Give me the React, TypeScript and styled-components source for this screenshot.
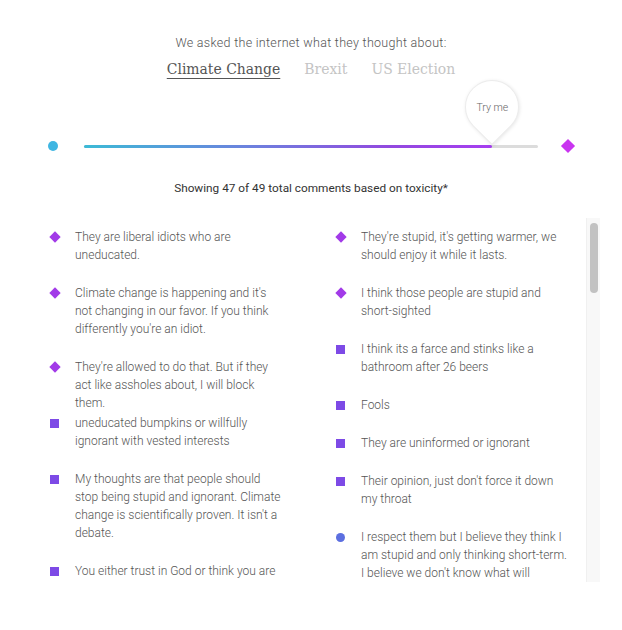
import React from 'react';
import styled, { createGlobalStyle } from 'styled-components';

type Level = 'severe' | 'toxic' | 'mild';

type CommentData = {
  text: string;
  level: Level;
  rows?: number;
};

const leftComments: CommentData[] = [
  { text: 'They are liberal idiots who are uneducated.', level: 'severe' },
  {
    text: "Climate change is happening and it's not changing in our favor. If you think differently you're an idiot.",
    level: 'severe',
  },
  //this one is given a 2 row slot even though it wraps to 3, like the original
  { text: "They're allowed to do that. But if they act like assholes about, I will block them.", level: 'severe', rows: 2 },
  { text: 'uneducated bumpkins or willfully ignorant with vested interests', level: 'toxic' },
  {
    text: "My thoughts are that people should stop being stupid and ignorant. Climate change is scientifically proven. It isn't a debate.",
    level: 'toxic',
  },
  { text: 'You either trust in God or think you are smarter than everyone else.', level: 'toxic' },
];

const rightComments: CommentData[] = [
  { text: "They're stupid, it's getting warmer, we should enjoy it while it lasts.", level: 'severe' },
  { text: 'I think those people are stupid and short-sighted', level: 'severe' },
  { text: 'I think its a farce and stinks like a bathroom after 26 beers', level: 'toxic' },
  { text: 'Fools', level: 'toxic' },
  { text: 'They are uninformed or ignorant', level: 'toxic' },
  { text: "Their opinion, just don't force it down my throat", level: 'toxic' },
  {
    text: "I respect them but I believe they think I am stupid and only thinking short-term. I believe we don't know what will happen.",
    level: 'mild',
  },
];

const topics = ['Climate Change', 'Brexit', 'US Election'];

const GlobalStyle = createGlobalStyle`
  body {
    margin: 0;
    background: #ffffff;
    font-family: Roboto, 'Noto Sans', sans-serif;
    -webkit-font-smoothing: antialiased;
  }
`;

const Page = styled.div`
  width: 622px;
  padding-top: 34px;
  display: flex;
  flex-direction: column;
  align-items: center;
`;

const Intro = styled.p`
  margin: 0;
  font-size: 12.5px;
  font-weight: 300;
  letter-spacing: 0.3px;
  line-height: 18px;
  color: #555;
`;

const Topics = styled.nav`
  display: flex;
  gap: 24px;
  margin-top: 5px;
`;

const Topic = styled.span<{ $active?: boolean }>`
  font-family: 'DejaVu Serif Condensed', 'DejaVu Serif', serif;
  font-size: 15.5px;
  font-weight: 300;
  line-height: 24px;
  color: ${(p) => (p.$active ? '#555' : '#c4c4c4')};
  text-decoration: ${(p) => (p.$active ? 'underline' : 'none')};
  text-underline-offset: 4px;
  text-decoration-thickness: 1px;
  cursor: pointer;
`;

const SliderRow = styled.div`
  align-self: flex-start;
  margin: 57px 0 0 48px;
  width: 525px;
  height: 16px;
  display: flex;
  align-items: center;
  justify-content: space-between;
`;

const LowDot = styled.span`
  width: 10px;
  height: 10px;
  border-radius: 50%;
  background: #3fb6e2;
`;

const HighDiamond = styled.span`
  width: 10px;
  height: 10px;
  background: #c935f0;
  transform: rotate(45deg);
`;

const Track = styled.div`
  position: relative;
  width: 454px;
  height: 3px;
  border-radius: 2px;
  background: #dcdcdc;
`;

const Fill = styled.div`
  height: 100%;
  border-radius: 2px;
  background: linear-gradient(90deg, #3cbad6 0%, #6c82de 40%, #9249df 75%, #a63ef0 100%);
`;

const Pin = styled.div`
  position: absolute;
  bottom: 4px;
  width: 52px;
  height: 52px;
  transform: translate(-50%, -10px) rotate(-45deg);
  border-radius: 50% 50% 50% 0;
  background: #fff;
  border: 1px solid #ececec;
  box-shadow: 0 1px 4px rgba(0, 0, 0, 0.1);
  display: flex;
  align-items: center;
  justify-content: center;
`;

const PinLabel = styled.span`
  transform: rotate(45deg);
  font-size: 10.5px;
  font-weight: 300;
  color: #666;
  white-space: nowrap;
`;

const Count = styled.p`
  margin: 25px 0 0;
  font-size: 11.8px;
  font-weight: 400;
  line-height: 18px;
  color: #333;
`;

const ListArea = styled.div`
  align-self: flex-start;
  margin: 21px 0 0 40px;
  width: 560px;
  height: 364px;
  display: flex;
`;

const ListViewport = styled.div`
  flex: 1;
  overflow: hidden;
`;

const ScrollTrack = styled.div`
  flex: none;
  width: 14px;
  background: #f8f8f8;
  border-left: 1px solid #f0f0f0;
  box-sizing: border-box;
  padding: 5px 2px 0 3px;
`;

const ScrollThumb = styled.div`
  height: 70px;
  border-radius: 5px;
  background: #c2c2c2;
`;

const Columns = styled.div`
  display: grid;
  grid-template-columns: 286px 1fr;
  padding-top: 10px;
  align-items: start;
`;

const Column = styled.ul`
  list-style: none;
  margin: 0;
  padding: 0;
`;

const Item = styled.li<{ $rows?: number }>`
  display: flex;
  gap: 15px;
  padding-left: 9px;
  height: ${(p) => (p.$rows ? `${p.$rows * 18 + 20}px` : 'auto')};
  padding-bottom: ${(p) => (p.$rows ? '0' : '20px')};
`;

const Marker = styled.span<{ $level: Level }>`
  flex: none;
  width: 11px;
  height: 18px;
  display: flex;
  align-items: center;
  justify-content: center;

  &::before {
    content: '';
    display: block;
    width: ${(p) => (p.$level === 'severe' ? '8px' : '9px')};
    height: ${(p) => (p.$level === 'severe' ? '8px' : '9px')};
    background: ${(p) => (p.$level === 'severe' ? '#a23ae8' : p.$level === 'toxic' ? '#7d4ae6' : '#5c6fe0')};
    border-radius: ${(p) => (p.$level === 'mild' ? '50%' : '0')};
    transform: ${(p) => (p.$level === 'severe' ? 'rotate(45deg)' : 'none')};
  }
`;

const Text = styled.p`
  margin: 0;
  width: 206px;
  font-size: 12px;
  font-weight: 300;
  line-height: 18px;
  color: #555;
`;

const CommentColumn: React.FC<{ comments: CommentData[] }> = ({ comments }) => (
  <Column>
    {comments.map((c) => (
      <Item key={c.text} $rows={c.rows}>
        <Marker $level={c.level} />
        <Text>{c.text}</Text>
      </Item>
    ))}
  </Column>
);

const App: React.FC = () => {
  const value = 0.899;

  return (
    <>
      <GlobalStyle />
      <Page>
        <Intro>We asked the internet what they thought about:</Intro>
        <Topics>
          {topics.map((t, i) => (
            <Topic key={t} $active={i === 0}>
              {t}
            </Topic>
          ))}
        </Topics>

        <SliderRow>
          <LowDot />
          <Track>
            <Fill style={{ width: `${value * 100}%` }} />
            <Pin style={{ left: `${value * 100}%` }}>
              <PinLabel>Try me</PinLabel>
            </Pin>
          </Track>
          <HighDiamond />
        </SliderRow>

        <Count>Showing 47 of 49 total comments based on toxicity*</Count>

        <ListArea>
          <ListViewport>
            <Columns>
              <CommentColumn comments={leftComments} />
              <CommentColumn comments={rightComments} />
            </Columns>
          </ListViewport>
          <ScrollTrack>
            <ScrollThumb />
          </ScrollTrack>
        </ListArea>
      </Page>
    </>
  );
};

export default App;
